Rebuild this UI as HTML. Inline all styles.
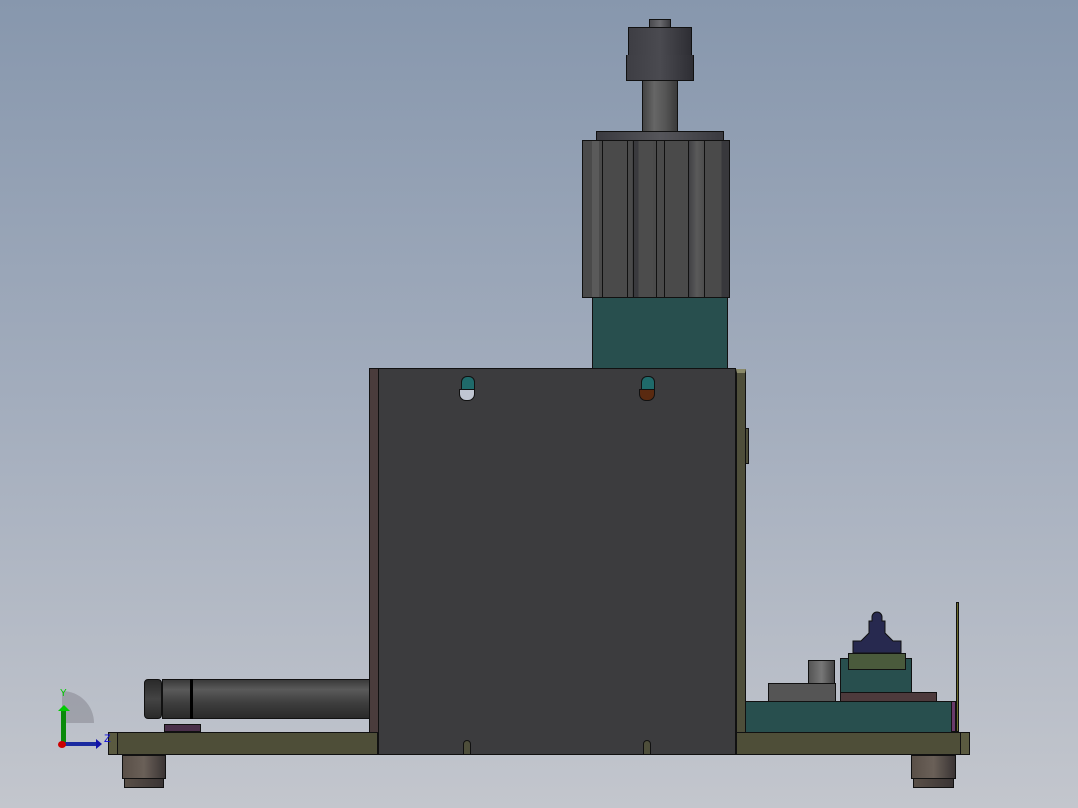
<!DOCTYPE html>
<html><head><style>
html,body{margin:0;padding:0}
body{width:1078px;height:808px;position:relative;overflow:hidden;background:linear-gradient(#8797ad 0%,#a3adbd 50%,#c3c6cd 100%);font-family:"Liberation Sans",sans-serif}
.b{position:absolute;box-sizing:border-box;border:1px solid #111}
</style></head><body>
<!-- motor -->
<div class="b" style="left:649px;top:19px;width:22px;height:9px;background:linear-gradient(90deg,#4a4a4e,#6a6a6e,#3a3a3e)"></div>
<div class="b" style="left:628px;top:27px;width:64px;height:54px;background:linear-gradient(90deg,#3e3e44,#4a4a50,#2e2e34)"></div>
<div class="b" style="left:626px;top:55px;width:68px;height:26px;border-top:none;background:linear-gradient(90deg,#3e3e44,#4a4a50,#2e2e34)"></div>
<div class="b" style="left:642px;top:80px;width:36px;height:52px;background:linear-gradient(90deg,#444,#666,#555,#3a3a3a)"></div>
<div class="b" style="left:596px;top:131px;width:128px;height:10px;background:linear-gradient(90deg,#3a3a40,#55555a,#3a3a40)"></div>
<div class="b" style="left:582px;top:140px;width:148px;height:158px;background:linear-gradient(90deg,#4a4a4a 0,#4a4a4a 6%,#5a5a5a 6%,#5a5a5a 11%,#4a4a4a 11%,#4a4a4a 34%,#3a3a3e 34%,#3a3a3e 38%,#4c4c4c 38%,#4c4c4c 48%,#4a4a4a 48%,#4a4a4a 72%,#3e3e42 72%,#5a5a5a 78%,#4a4a4a 84%,#4a4a4a 95%,#38383c 95%)"></div>
<div style="position:absolute;left:602px;top:140px;width:1px;height:158px;background:#111"></div>
<div style="position:absolute;left:627px;top:140px;width:1px;height:158px;background:#111"></div>
<div style="position:absolute;left:633px;top:140px;width:1px;height:158px;background:#111"></div>
<div style="position:absolute;left:656px;top:140px;width:1px;height:158px;background:#111"></div>
<div style="position:absolute;left:664px;top:140px;width:1px;height:158px;background:#111"></div>
<div style="position:absolute;left:688px;top:140px;width:1px;height:158px;background:#111"></div>
<div style="position:absolute;left:704px;top:140px;width:1px;height:158px;background:#111"></div>
<div class="b" style="left:592px;top:297px;width:136px;height:72px;background:#284f4e"></div>
<!-- box -->
<div class="b" style="left:369px;top:368px;width:10px;height:365px;background:#4a3c3c"></div>
<div class="b" style="left:378px;top:368px;width:358px;height:387px;background:#3c3c3e"></div>
<div class="b" style="left:736px;top:369px;width:10px;height:364px;background:#4e4e3a;border-top:4px solid #8a8a6a"></div>
<div class="b" style="left:745px;top:428px;width:4px;height:36px;background:#4e4e3a"></div>
<!-- bulbs -->
<div style="position:absolute;left:461px;top:376px;width:12px;height:14px;background:#1f6a6a;border:1px solid #111;border-radius:6px 6px 0 0"></div>
<div style="position:absolute;left:459px;top:389px;width:14px;height:10px;background:#c0c6d2;border:1px solid #111;border-radius:0 0 7px 7px"></div>
<div style="position:absolute;left:641px;top:376px;width:12px;height:14px;background:#1f6a6a;border:1px solid #111;border-radius:6px 6px 0 0"></div>
<div style="position:absolute;left:639px;top:389px;width:14px;height:10px;background:#5a2a10;border:1px solid #111;border-radius:0 0 7px 7px"></div>
<div class="b" style="left:463px;top:740px;width:8px;height:15px;background:#4e4e3a;border-radius:4px 4px 0 0"></div>
<div class="b" style="left:643px;top:740px;width:8px;height:15px;background:#4e4e3a;border-radius:4px 4px 0 0"></div>
<!-- base -->
<div class="b" style="left:108px;top:732px;width:270px;height:23px;background:#4e4e38"></div>
<div class="b" style="left:736px;top:732px;width:234px;height:23px;background:#4e4e38"></div>
<div class="b" style="left:108px;top:732px;width:10px;height:23px;background:#5a5a40"></div>
<div class="b" style="left:960px;top:732px;width:10px;height:23px;background:#5a5a40"></div>
<div class="b" style="left:122px;top:755px;width:44px;height:24px;background:linear-gradient(90deg,#5a5048,#6a6058,#3a3434)"></div>
<div class="b" style="left:124px;top:778px;width:40px;height:10px;background:linear-gradient(90deg,#5a5048,#3a3434)"></div>
<div class="b" style="left:911px;top:755px;width:45px;height:24px;background:linear-gradient(90deg,#5a5048,#6a6058,#3a3434)"></div>
<div class="b" style="left:913px;top:778px;width:41px;height:10px;background:linear-gradient(90deg,#5a5048,#3a3434)"></div>
<!-- cylinder -->
<div class="b" style="left:162px;top:679px;width:208px;height:40px;background:linear-gradient(#3a3a3a,#5a5a5a 25%,#3e3e3e 60%,#2a2a2a)"></div>
<div style="position:absolute;left:190px;top:679px;width:3px;height:40px;background:#000"></div>
<div class="b" style="left:144px;top:679px;width:18px;height:40px;border-radius:4px;background:linear-gradient(#2a2a2a,#444 50%,#2a2a2a)"></div>
<div class="b" style="left:164px;top:724px;width:37px;height:8px;background:#4a2f4a"></div>
<!-- right assembly -->
<div class="b" style="left:956px;top:602px;width:3px;height:130px;background:#6a6a2a"></div>
<div class="b" style="left:745px;top:701px;width:207px;height:32px;background:#284f4e"></div>
<div class="b" style="left:951px;top:701px;width:5px;height:31px;background:#6a3a6a"></div>
<div class="b" style="left:768px;top:683px;width:68px;height:19px;background:#555"></div>
<div class="b" style="left:808px;top:660px;width:27px;height:24px;background:linear-gradient(90deg,#555,#777,#444)"></div>
<div class="b" style="left:840px;top:692px;width:97px;height:10px;background:#4d3a3c"></div>
<div class="b" style="left:840px;top:658px;width:72px;height:35px;background:#284f4e"></div>
<div class="b" style="left:848px;top:653px;width:58px;height:17px;background:#4a5a3c"></div>
<svg style="position:absolute;left:848px;top:611px" width="58" height="50" viewBox="0 0 58 50"><path d="M24 6 a5 5 0 0 1 10 0 v4 h3 v12 l8 8 h8 v12 h-48 v-12 h8 l8 -8 v-12 h3z" fill="#27294f" stroke="#111"/></svg>
<!-- axes -->
<div style="position:absolute;left:62px;top:691px;width:32px;height:32px;border-radius:0 32px 0 0;background:rgba(130,130,140,0.5)"></div>
<div style="position:absolute;left:61px;top:708px;width:5px;height:38px;background:#0a8a0a"></div>
<div style="position:absolute;left:58px;top:705px;width:0;height:0;border-left:6px solid transparent;border-right:6px solid transparent;border-bottom:6px solid #0c0"></div>
<div style="position:absolute;left:63px;top:742px;width:34px;height:4px;background:#1a2aa0"></div>
<div style="position:absolute;left:96px;top:739px;width:0;height:0;border-top:5px solid transparent;border-bottom:5px solid transparent;border-left:6px solid #11a"></div>
<div style="position:absolute;left:58px;top:741px;width:8px;height:7px;border-radius:50%;background:#c00"></div>
<div style="position:absolute;left:60px;top:688px;font-size:10px;color:#0c0">Y</div>
<div style="position:absolute;left:104px;top:733px;font-size:11px;color:#11d">Z</div>
</body></html>
